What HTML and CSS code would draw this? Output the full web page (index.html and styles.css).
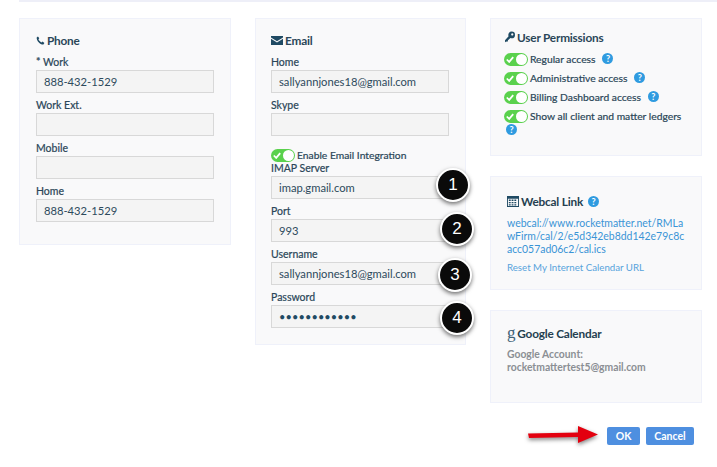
FILE: index.html
```
<!DOCTYPE html>
<html lang="en">
<head>
<meta charset="utf-8">
<title>User settings</title>
<link rel="stylesheet" href="styles.css">
</head>
<body>
<div class="topbar"></div>
<main class="columns">
  <section class="panel phone">
    <h2 class="title"><svg class="ic ic-phone" viewBox="0 0 12 12" width="9" height="11"><path d="M2.6.6 4.4 3 3.3 4.4c.6 1.8 2 3.300 4 4.200L8.700 7.400 11.200 9.400 9.900 11.300C5.500 11.500.6 6.600.9 1.900Z"/></svg>Phone</h2>
    <label class="lbl">* Work</label><div class="inp">888-432-1529</div>
    <label class="lbl">Work Ext.</label><div class="inp"></div>
    <label class="lbl">Mobile</label><div class="inp"></div>
    <label class="lbl">Home</label><div class="inp">888-432-1529</div>
  </section>
  <section class="panel email">
    <h2 class="title"><svg class="ic" viewBox="0 0 12 9" width="12" height="9"><path d="M0 0H12V1.500L6 5.200 0 1.500Z"/><path d="M0 2.800 6 6.500 12 2.800V9H0Z"/></svg>Email</h2>
    <label class="lbl">Home</label><div class="inp">sallyannjones18@gmail.com</div>
    <label class="lbl">Skype</label><div class="inp"></div>
    <div class="tog-row int"><span class="tog"><svg viewBox="0 0 10 8" width="8" height="7"><path d="M1 4 4 7 9 1" fill="none" stroke="#fff" stroke-width="2.200"/></svg></span><span>Enable Email Integration</span></div>
    <label class="lbl imap">IMAP Server</label><div class="inp">imap.gmail.com</div>
    <label class="lbl">Port</label><div class="inp">993</div>
    <label class="lbl">Username</label><div class="inp">sallyannjones18@gmail.com</div>
    <label class="lbl">Password</label><div class="inp pw">••••••••••••</div>
  </section>
  <div class="side">
    <section class="panel perms">
      <h2 class="title t2"><svg class="ic" viewBox="0 0 12 13" width="10" height="12"><path d="M8 0A4 4 0 0 1 8 8 4 4 0 0 1 6.500 7.700L3.500 10.500V12H1.800L.8 12.800 0 12V10.500L4.300 5.500A4 4 0 0 1 8 0ZM8.700 2A1.300 1.300 0 1 0 8.710 2Z" fill-rule="evenodd"/></svg>User Permissions</h2>
      <div class="tog-row"><span class="tog"><svg viewBox="0 0 10 8" width="8" height="7"><path d="M1 4 4 7 9 1" fill="none" stroke="#fff" stroke-width="2.200"/></svg></span><span>Regular access</span><span class="q">?</span></div>
      <div class="tog-row"><span class="tog"><svg viewBox="0 0 10 8" width="8" height="7"><path d="M1 4 4 7 9 1" fill="none" stroke="#fff" stroke-width="2.200"/></svg></span><span>Administrative access</span><span class="q">?</span></div>
      <div class="tog-row"><span class="tog"><svg viewBox="0 0 10 8" width="8" height="7"><path d="M1 4 4 7 9 1" fill="none" stroke="#fff" stroke-width="2.200"/></svg></span><span>Billing Dashboard access</span><span class="q">?</span></div>
      <div class="tog-row"><span class="tog"><svg viewBox="0 0 10 8" width="8" height="7"><path d="M1 4 4 7 9 1" fill="none" stroke="#fff" stroke-width="2.200"/></svg></span><span>Show all client and matter ledgers</span></div>
      <span class="q q-wrap">?</span>
    </section>
    <section class="panel webcal">
      <h2 class="title t3"><svg class="ic" viewBox="0 0 13 13" width="12" height="12"><path fill-rule="evenodd" d="M0 1H13V13H0ZM1 4V12H12V4ZM2 5H4V6.500H2ZM5 5H7V6.500H5ZM8 5H10V6.500H8ZM2 7.500H4V9H2ZM5 7.500H7V9H5ZM8 7.500H10V9H8ZM2 10H4V11.500H2ZM5 10H7V11.500H5ZM8 10H10V11.500H8Z"/></svg>Webcal Link<span class="q">?</span></h2>
      <p class="url">webcal://www.rocketmatter.net/RMLa<br>wFirm/cal/2/e5d342eb8dd142e79c8c<br>acc057ad06c2/cal.ics</p>
      <p class="reset">Reset My Internet Calendar URL</p>
    </section>
    <section class="panel google">
      <h2 class="title t3 gt"><span class="g">g</span>Google Calendar</h2>
      <p class="acct">Google Account:<br>rocketmattertest5@gmail.com</p>
    </section>
  </div>
</main>
<div class="actions"><button class="btn ok">OK</button><button class="btn">Cancel</button></div>

<span class="badge b1">1</span>
<span class="badge b2">2</span>
<span class="badge b3">3</span>
<span class="badge b4">4</span>
<svg class="arrow" viewBox="0 0 70 18" width="70" height="18"><path d="M0 7.500 50 6.500V0L70 8.500 50 17V11L1 12Z" fill="#e3000f"/></svg>
</body>
</html>
```
FILE: styles.css
```
* { box-sizing: border-box; }
html, body { margin: 0; }
body {
  width: 717px; height: 467px; overflow: hidden; position: relative;
  background: #fff; color: #2d4a5c;
  font-family: Lato, "Liberation Sans", sans-serif; font-size: 11px;
}
.topbar { height: 2px; margin-left: 19px; background: #eeeff8; }
.columns { display: flex; align-items: flex-start; gap: 24px; margin: 16px 15px 0 19px; }
.panel { background: #f9f9fa; border: 1px solid #eff1fa; padding: 0 16px; }
.phone { width: 212px; height: 227px; }
.email { width: 211px; height: 327px; flex: none; padding-left: 15px; }
.side { width: 212px; display: flex; flex-direction: column; gap: 20px; }
.title { display: flex; align-items: center; margin: 14px 0 0; height: 14px; font-size: 11.800px; letter-spacing: -.2px; font-weight: 700; color: #2a4658; }
.ic { fill: #1f4a63; margin-right: 2px; flex: none; }
.lbl { display: block; height: 14px; line-height: 15px; margin-top: 5px; font-size: 10.500px; font-weight: 400; color: #2a4658; -webkit-text-stroke: .2px #2a4658; }
.title + .lbl { margin-top: 8px; }
.inp {
  height: 23px; line-height: 21px; padding: 0 6px 0 7px; margin-top: 1px;
  background: #f4f4f4; border: 1px solid #d8d8d8; color: #2d4a5c; font-size: 11.200px;
}
.pw { font-size: 11px; letter-spacing: .1px; color: #1f4a63; }
.tog-row { display: flex; align-items: flex-start; gap: 2px; height: 19.330px; line-height: 13px; font-size: 10.300px; font-weight: 400; color: #2a4658; -webkit-text-stroke: .2px #2a4658; }
.int { margin-top: 13px; height: 13px; }
.imap { margin-top: 0; height: 13px; line-height: 13px; }
.tog {
  position: relative; width: 24px; height: 13px; border-radius: 7px; background: #5ad14d; flex: none;
  display: flex; align-items: center; padding-left: 2px;
}
.tog::after { content: ""; position: absolute; right: 1px; top: 1px; width: 11px; height: 11px; border-radius: 50%; background: #fff; }
.perms { height: 138px; padding-left: 13px; padding-right: 10px; }
.t2 { margin: 11px 0 8.500px 1px; }
.q {
  display: inline-flex; align-items: center; justify-content: center; width: 11px; height: 11px; margin-left: 5px;
  border-radius: 50%; background: #2f9be0; color: #fff; font: 700 9px/11px Lato, "Liberation Sans", sans-serif; flex: none;
  -webkit-text-stroke: 0; letter-spacing: 0;
}
.q-wrap { display: flex; margin: -6px 0 0 2px; }
.webcal { height: 114px; }
.t3 { margin-top: 17px; color: #253f50; }
.url { margin: 9px 0 0; color: #3a94d6; font-size: 10.450px; line-height: 13px; white-space: nowrap; }
.reset { margin: 4px 0 0; color: #57a3dc; font-size: 9.700px; line-height: 14px; white-space: nowrap; }
.google { height: 93px; }
.gt { margin-top: 15px; }
.g { font: 400 17px/14px "Liberation Serif", serif; color: #3f6278; margin-right: 2px; }
.acct { margin: 8px 0 0; color: #8b8f94; font-size: 10.350px; font-weight: 700; line-height: 13px; white-space: nowrap; }
.actions { display: flex; justify-content: flex-end; gap: 6px; margin: 24px 23px 0 0; }
.btn {
  height: 18px; width: 48px; padding: 0; border: 0; border-radius: 2px; background: #4e8fe0; color: #fff;
  font: 700 10.500px/18px Lato, "Liberation Sans", sans-serif;
}
.ok { width: 33px; }
.badge {
  position: absolute; width: 34px; height: 34px; border-radius: 50%; background: #0a0a0a; color: #fff;
  border: 2px solid #fff; box-shadow: 0 2px 4px rgba(0,0,0,.55);
  font: 400 17px/30px "Liberation Sans", sans-serif; text-align: center;
}
.b1 { left: 436px; top: 168px; }
.b2 { left: 440px; top: 212px; }
.b3 { left: 438px; top: 258px; }
.b4 { left: 440px; top: 301px; }
.arrow { position: absolute; left: 528px; top: 426px; filter: drop-shadow(0 2px 2px rgba(0,0,0,.5)); }
```
